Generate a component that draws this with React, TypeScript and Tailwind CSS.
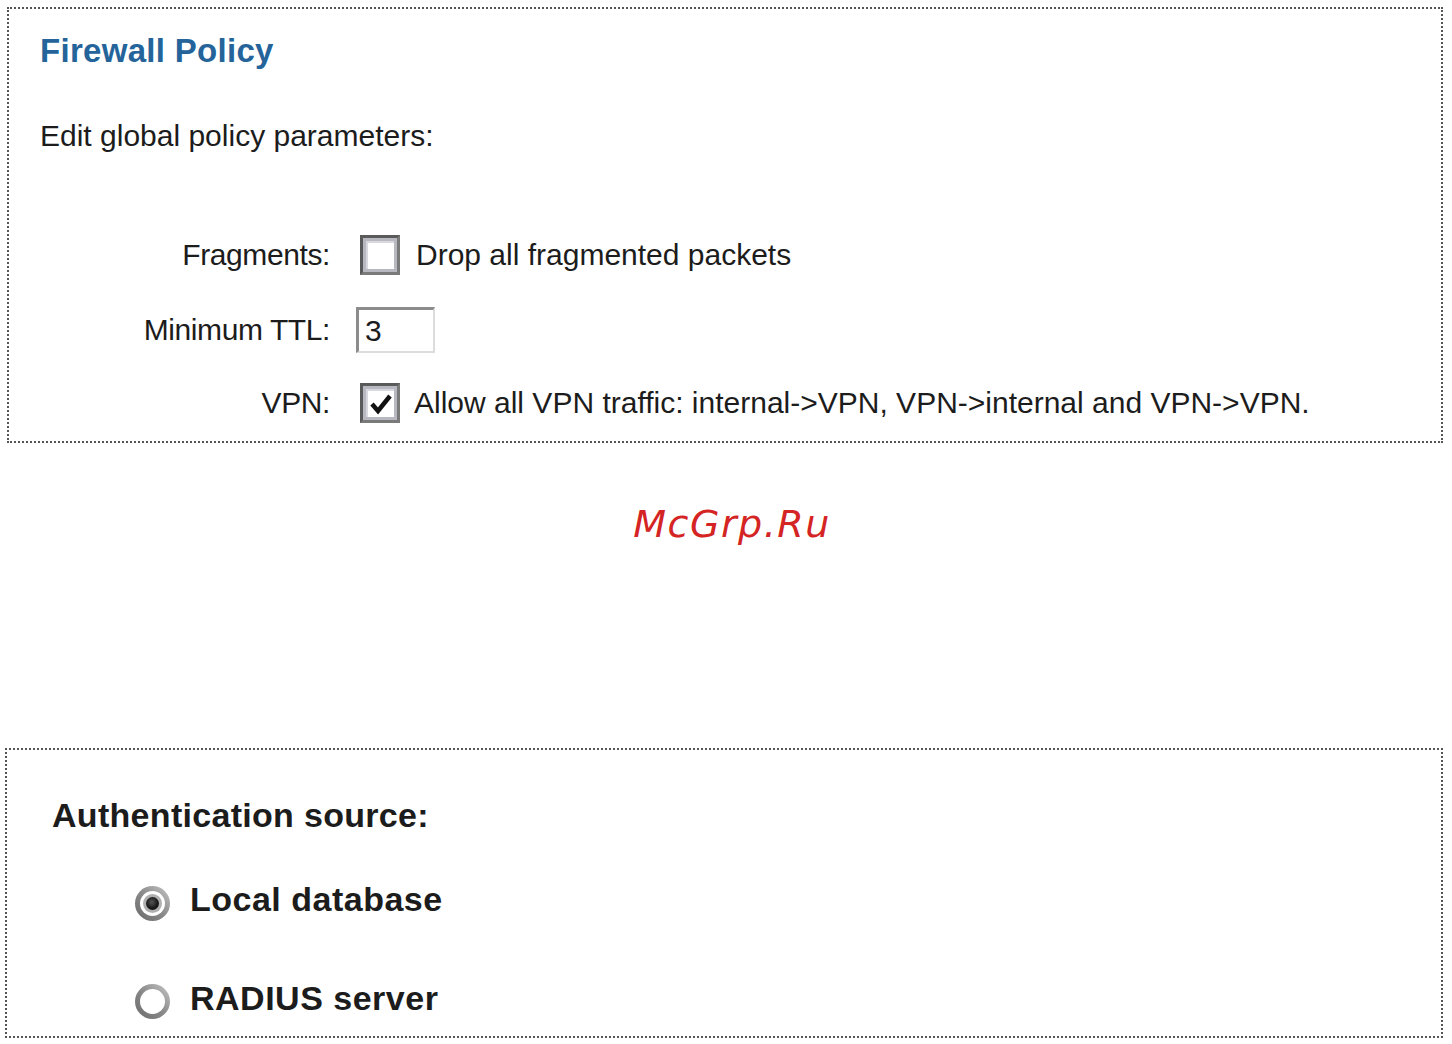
import React from "react";

const sans = { fontFamily: '"Liberation Sans", Arial, sans-serif' };

function Checkbox({ checked }: { checked?: boolean }) {
  return (
    <div className="w-[40px] h-[40px] shrink-0 border-[3px] border-t-[#5a5a5a] border-l-[#5a5a5a] border-r-[#7a7a7a] border-b-[#7a7a7a] bg-[#b8b8c0] p-[3px]">
      <div className="w-full h-full bg-white border-t-[2px] border-l-[2px] border-t-[#d8d8de] border-l-[#d8d8de] flex items-center justify-center">
        {checked && (
          <svg width="24" height="22" viewBox="0 0 24 22">
            <path d="M3 11 L9 18 L21 3" fill="none" stroke="#111" strokeWidth="4.5" strokeLinejoin="miter" />
          </svg>
        )}
      </div>
    </div>
  );
}

function Radio({ checked }: { checked?: boolean }) {
  return (
    <div className="w-[35px] h-[35px] shrink-0 rounded-full bg-gradient-to-bl from-[#c8c8c8] via-[#8a8a8a] to-[#6a6a6a] p-[5px]">
      <div className="w-full h-full rounded-full bg-white flex items-center justify-center">
        {checked && (
          <div className="w-[19px] h-[19px] rounded-full bg-[#b0b0b0] flex items-center justify-center">
            <div className="w-[13px] h-[13px] rounded-full bg-[radial-gradient(circle_at_45%_40%,#555_0%,#1a1a1a_55%,#111_100%)]" />
          </div>
        )}
      </div>
    </div>
  );
}

export default function App() {
  return (
    <div className="w-[1452px] h-[1044px] bg-white text-[#1c1c1c] overflow-hidden" style={sans}>
      <div className="pt-[7px]">
        <div className="ml-[7px] w-[1436px] h-[436px] border-2 border-dotted border-[#555] pt-[25px] pl-[31px]">
          <div className="text-[33px] leading-none font-bold text-[#24649a] tracking-[0.3px]">Firewall Policy</div>
          <div className="mt-[54px] text-[30px] leading-none">Edit global policy parameters:</div>

          <div className="mt-[84px] -ml-[31px] flex flex-col text-[30px] leading-none">
            <div className="flex items-center h-[40px]">
              <div className="w-[321px] text-right tracking-[-0.4px]">Fragments:</div>
              <div className="ml-[30px]"><Checkbox /></div>
              <div className="ml-[16px]">Drop all fragmented packets</div>
            </div>
            <div className="flex items-center h-[46px] mt-[32px]">
              <div className="w-[321px] text-right tracking-[-0.4px]">Minimum TTL:</div>
              <div className="ml-[26px] w-[79px] h-[46px] bg-white border-t-[3px] border-l-[3px] border-r-[2px] border-b-[2px] border-t-[#8c8c8c] border-l-[#8c8c8c] border-r-[#dcdcdc] border-b-[#dcdcdc] flex items-center pl-[6px] text-[30px]">
                3
              </div>
            </div>
            <div className="flex items-center h-[40px] mt-[30px]">
              <div className="w-[321px] text-right tracking-[-0.4px]">VPN:</div>
              <div className="ml-[30px]"><Checkbox checked /></div>
              <div className="ml-[14px]">Allow all VPN traffic: internal-&gt;VPN, VPN-&gt;internal and VPN-&gt;VPN.</div>
            </div>
          </div>
        </div>

        <div className="mt-[62px] flex justify-center pl-[12px]">
          <div
            className="text-[38px] leading-none italic text-[#d42424] tracking-[1.5px]"
            style={{ fontFamily: '"DejaVu Sans", Verdana, sans-serif' }}
          >
            McGrp.Ru
          </div>
        </div>

        <div className="mt-[205px] ml-[5px] w-[1438px] h-[290px] border-2 border-dotted border-[#555] pt-[48px] pl-[45px]">
          <div className="text-[34px] leading-none font-bold tracking-[0.3px]">Authentication source:</div>
          <div className="mt-[54px] -ml-[45px] pl-[128px] flex flex-col text-[34px] leading-none font-bold tracking-[0.5px]">
            <div className="flex items-center h-[35px]">
              <Radio checked />
              <div className="ml-[20px] pb-[9px]">Local database</div>
            </div>
            <div className="flex items-center h-[35px] mt-[63px]">
              <Radio />
              <div className="ml-[20px] pb-[7px]">RADIUS server</div>
            </div>
          </div>
        </div>
      </div>
    </div>
  );
}
